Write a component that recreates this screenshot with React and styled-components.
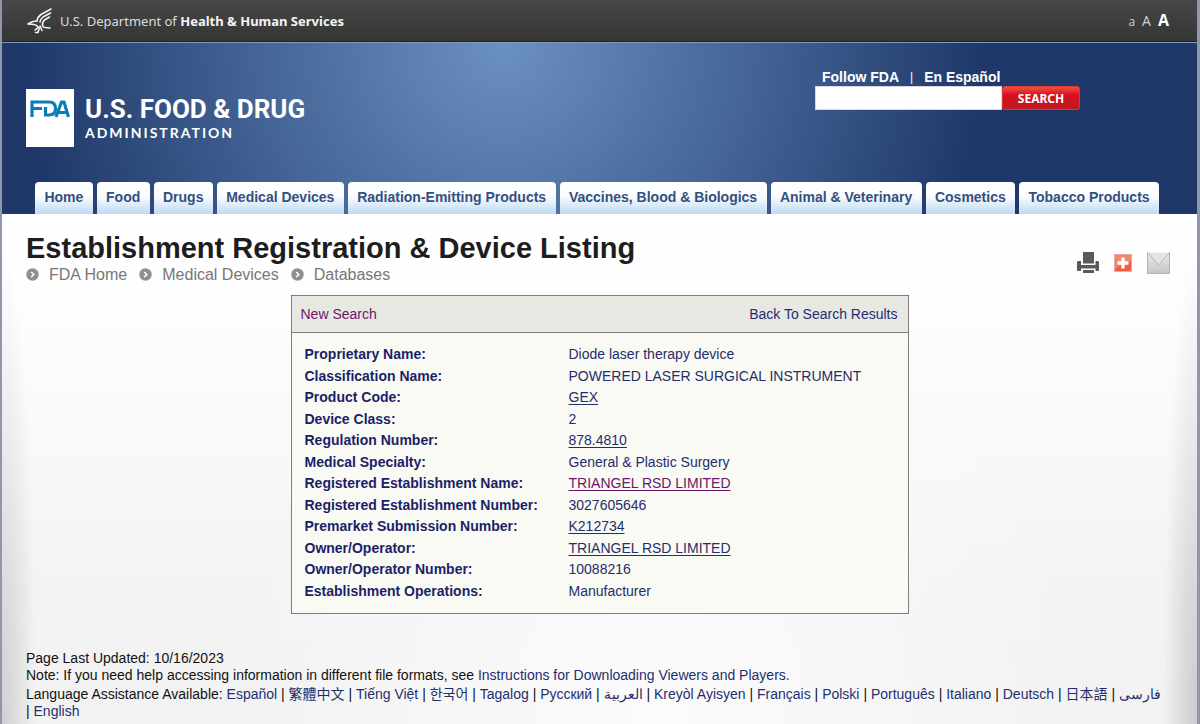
import React from "react";
import styled, { createGlobalStyle } from "styled-components";

const GlobalStyle = createGlobalStyle`
  * { box-sizing: border-box; }
  body {
    margin: 0;
    background: #8d99a8;
    font-family: "Liberation Sans", Arial, "Noto Sans CJK TC", sans-serif;
    font-size: 14px;
    color: #111;
  }
  a { color: #1f2f6e; text-decoration: none; }
`;

const Page = styled.div`
  min-height: 100vh;
  margin: 0 3px 0 2px;
  display: flex;
  flex-direction: column;
`;

const TopBar = styled.div`
  height: 42px;
  padding: 0 28px 0 24px;
  display: flex;
  align-items: center;
  justify-content: space-between;
  background: linear-gradient(#474747, #353535);
  border-bottom: 1px solid #222;
`;

const Department = styled.a`
  display: flex;
  align-items: center;
  gap: 7px;
  color: #dcdcdc;
  font-family: "Noto Sans", "Open Sans", sans-serif;
  font-size: 13px;
  strong { color: #f4f4f4; }
`;

const TextSizes = styled.div`
  display: flex;
  align-items: baseline;
  gap: 7px;
`;

const SizeButton = styled.button`
  padding: 0;
  border: 0;
  background: none;
  color: ${(p) => (p.$bold ? "#fff" : "#d0d0d0")};
  font-family: "Open Sans", "Noto Sans", sans-serif;
  font-size: ${(p) => p.$size}px;
  font-weight: ${(p) => (p.$bold ? 700 : 400)};
  line-height: 20px;
`;

const Header = styled.header`
  border-top: 1px solid #7f9cc0;
  background: radial-gradient(circle 480px at 42% 0, #6b91c1 0%, #456697 50%, #1f3869 100%);
`;

const HeaderMain = styled.div`
  height: 139px;
  padding: 25px 117px 0 24px;
  display: flex;
  justify-content: space-between;
  align-items: flex-start;
`;

const Brand = styled.a`
  margin-top: 21px;
  display: flex;
  gap: 11px;
  color: #fff;
`;

const BrandMark = styled.span`
  width: 48px;
  height: 58px;
  padding: 11px 4px 0;
  background: #fff;
`;

const BrandName = styled.span`
  padding-top: 5px;
  display: flex;
  flex-direction: column;
  font-family: Roboto, sans-serif;
  font-size: 26px;
  font-weight: 700;
  line-height: 30px;
  white-space: nowrap;
`;

const BrandSub = styled.span`
  font-family: Lato, sans-serif;
  font-size: 14px;
  line-height: 18px;
  letter-spacing: 2px;
`;

const SearchArea = styled.form`
  width: 265px;
`;

const QuickLinks = styled.div`
  height: 18px;
  padding-left: 7px;
  display: flex;
  align-items: center;
  gap: 11px;
  color: #fff;
  a { color: #fff; font-weight: 700; }
  span { font-size: 12px; }
`;

const SearchRow = styled.div`
  display: flex;
`;

const SearchInput = styled.input`
  flex: 1;
  min-width: 0;
  height: 24px;
  padding: 0 6px;
  border: 1px solid #d8d8d8;
  border-radius: 0;
  background: #fff;
`;

const SearchButton = styled.button`
  width: 78px;
  height: 24px;
  padding: 0;
  border: 1px solid #d83a2c;
  border-radius: 3px;
  background: linear-gradient(#f0523f 0%, #dc0f22 35%, #c5161f 80%, #c01c22 100%);
  color: #fff;
  font-family: "Noto Sans", "Open Sans", sans-serif;
  font-size: 12px;
  font-weight: 700;
`;

const Tabs = styled.nav`
  padding: 0 38px 0 33px;
  display: flex;
  gap: 4px;
`;

const Tab = styled.a`
  flex: 1 1 auto;
  height: 32px;
  border-radius: 4px 4px 0 0;
  background: linear-gradient(#ffffff 0%, #fafcfe 45%, #bcdaf3 100%);
  color: #33507f;
  font-size: 14px;
  font-weight: 700;
  line-height: 30px;
  text-align: center;
  white-space: nowrap;
`;

const Main = styled.main`
  flex: 1;
  padding: 18px 24px 4px;
  background:
    radial-gradient(ellipse 34px 95% at 0 100%, rgba(0, 0, 0, 0.14), rgba(0, 0, 0, 0)),
    radial-gradient(ellipse 34px 95% at 100% 100%, rgba(0, 0, 0, 0.16), rgba(0, 0, 0, 0)),
    radial-gradient(ellipse 36% 100% at 55% 100%, rgba(255, 255, 255, 0.7), rgba(255, 255, 255, 0)),
    linear-gradient(#ffffff, #fdfdfd 20%, #f3f3f3 75%, #f2f2f2);
`;

const TitleRow = styled.div`
  padding-right: 3px;
  display: flex;
  justify-content: space-between;
`;

const Title = styled.h1`
  margin: 0;
  color: #1d1d1d;
  font-size: 29px;
  line-height: 33px;
`;

const Breadcrumbs = styled.nav`
  display: flex;
  gap: 12px;
`;

const Crumb = styled.a`
  display: flex;
  align-items: center;
  gap: 10px;
  color: #777;
  font-size: 16px;
  line-height: 19px;
`;

const Tools = styled.div`
  padding-top: 19px;
  display: flex;
  align-items: flex-start;
  gap: 15px;
`;

const ToolButton = styled.button`
  height: 24px;
  padding: 0;
  border: 0;
  background: none;
  display: flex;
  align-items: center;
`;

const Panel = styled.section`
  max-width: 618px;
  margin: 11px auto 0;
  border: 1px solid #7d7d7d;
  background: #f9faf4;
`;

const PanelHead = styled.div`
  height: 37px;
  padding: 0 10px 0 9px;
  display: flex;
  align-items: center;
  justify-content: space-between;
  border-bottom: 1px solid #7d7d7d;
  background: #e7e8e2;
`;

const PanelLink = styled.a`
  color: ${(p) => (p.$visited ? "#6c176c" : "#1f2f6e")};
`;

const DataTable = styled.table`
  width: 100%;
  margin: 11px 0;
  border-collapse: collapse;
  color: #262d6c;
  th, td {
    height: 21px;
    padding: 0;
    line-height: 21px;
    text-align: left;
  }
  th {
    width: 277px;
    padding-left: 13px;
    color: #1b1f68;
  }
  tr:nth-child(even) th, tr:nth-child(even) td { height: 22px; }
`;

const DataLink = styled.a`
  color: ${(p) => (p.$visited ? "#6c176c" : "#1f2f6e")};
  text-decoration: underline;
  text-underline-offset: 2px;
`;

const Footer = styled.footer`
  padding-top: 36px;
  line-height: 17px;
  p { margin: 0; }
`;

const Languages = styled.p`
  padding-top: 2px;
`;

const Language = styled.span`
  white-space: nowrap;
`;

function EagleLogo() {
  return (
    <svg width="27" height="28" viewBox="0 0 27 28" fill="none" stroke="#f2f2f2" strokeWidth="1.6" strokeLinecap="round" strokeLinejoin="round" aria-hidden="true">
      <path d="M25 2 L15 7.500 Q11.500 10 11 14" />
      <path d="M24.500 6 L17 10 Q14.500 12 14 15" />
      <path d="M23.500 10 L18.500 13 Q17 14 16.500 17" />
      <path d="M11 14 Q7 13.500 2 17 L8 17.500 Q11 18 12 20" />
      <path d="M16.500 17 Q16 20 19 20.500 L24 21 M12 20 Q11 22 9 23 M13.500 20.500 L12 25.500 H9.500 M14 19 L16 23.500" />
    </svg>
  );
}

function FdaMark() {
  return (
    <svg width="40" height="18" viewBox="0 0 40 18" fill="none" stroke="#0a7cba" strokeWidth="3.200" aria-hidden="true">
      <path d="M2 17 V2 H19 Q25.500 2 25.500 8.500 Q25.500 15 19 15 H15.500 V7 M2 8.500 H12" />
      <path d="M26 17 L31.500 2 H34 L38.500 17 M29 12.500 H37" />
    </svg>
  );
}

function CrumbIcon() {
  return (
    <svg width="13" height="13" viewBox="0 0 13 13" aria-hidden="true">
      <circle cx="6.500" cy="6.500" r="6.200" fill="#8f8f8f" />
      <path d="M5.200 4 L7.800 6.500 L5.200 9" fill="none" stroke="#fff" strokeWidth="1.600" />
    </svg>
  );
}

function PrinterIcon() {
  return (
    <svg width="22" height="22" viewBox="0 0 22 22" fill="#5a5a5a" aria-hidden="true">
      <path d="M6 0 H17 V11.500 H6 Z" />
      <path d="M0 10 Q0 9 1 9 H4 V13 H18.500 V9 H21 Q22 9 22 10 V18 Q22 19 21 19 H18.500 V16 H4 V19 H1 Q0 19 0 18 Z" />
      <path d="M4 14 H18.500 V16.500 H4 Z" />
      <path d="M6 18 H17 V21 H6 Z" />
    </svg>
  );
}

function ShareIcon() {
  return (
    <svg width="18" height="18" viewBox="0 0 18 18" aria-hidden="true">
      <rect width="18" height="18" fill="#ee5f42" />
      <path d="M0 0 H18 V7 Q8 9 0 16 Z" fill="#f08570" />
      <rect x="0.500" y="0.500" width="17" height="17" fill="none" stroke="#ecaa9e" />
      <path d="M9 3.500 V14.500 M3.500 9 H14.500" stroke="#fff" strokeWidth="3.400" />
    </svg>
  );
}

function MailIcon() {
  return (
    <svg width="23" height="22" viewBox="0 0 23 22" aria-hidden="true">
      <defs>
        <linearGradient id="mail" x1="0" y1="0" x2="0" y2="1">
          <stop offset="0" stopColor="#e9e9e9" />
          <stop offset="1" stopColor="#c6c6c6" />
        </linearGradient>
      </defs>
      <path d="M0.500 0.500 L11.500 13 L22.500 0.500 V21.500 H0.500 Z" fill="url(#mail)" />
      <path d="M0.500 0.500 H22.500 L11.500 13 Z" fill="#e4e4e4" />
      <path d="M0.500 0.500 V21.500 H22.500 V0.500 M0.500 0.500 L11.500 13 L22.500 0.500" fill="none" stroke="#b3b3b3" />
    </svg>
  );
}

const TABS = [
  "Home",
  "Food",
  "Drugs",
  "Medical Devices",
  "Radiation-Emitting Products",
  "Vaccines, Blood & Biologics",
  "Animal & Veterinary",
  "Cosmetics",
  "Tobacco Products",
];

const RECORD = [
  { label: "Proprietary Name:", value: "Diode laser therapy device" },
  { label: "Classification Name:", value: "POWERED LASER SURGICAL INSTRUMENT" },
  { label: "Product Code:", value: "GEX", link: true },
  { label: "Device Class:", value: "2" },
  { label: "Regulation Number:", value: "878.4810", link: true },
  { label: "Medical Specialty:", value: "General & Plastic Surgery" },
  { label: "Registered Establishment Name:", value: "TRIANGEL RSD LIMITED", link: true, visited: true },
  { label: "Registered Establishment Number:", value: "3027605646" },
  { label: "Premarket Submission Number:", value: "K212734", link: true },
  { label: "Owner/Operator:", value: "TRIANGEL RSD LIMITED", link: true },
  { label: "Owner/Operator Number:", value: "10088216" },
  { label: "Establishment Operations:", value: "Manufacturer" },
];

const LANGUAGES = [
  "Español", "繁體中文", "Tiếng Việt", "한국어", "Tagalog", "Русский", "العربية",
  "Kreyòl Ayisyen", "Français", "Polski", "Português", "Italiano", "Deutsch",
  "日本語", "فارسی", "English",
];

export default function App() {
  return (
    <>
      <GlobalStyle />
      <Page>
        <TopBar>
          <Department href="#">
            <EagleLogo />
            <span>U.S. Department of <strong>Health &amp; Human Services</strong></span>
          </Department>
          <TextSizes>
            <SizeButton type="button" $size={12} aria-label="Small text">a</SizeButton>
            <SizeButton type="button" $size={14} aria-label="Medium text">A</SizeButton>
            <SizeButton type="button" $size={16} $bold aria-label="Large text">A</SizeButton>
          </TextSizes>
        </TopBar>
        <Header>
          <HeaderMain>
            <Brand href="#">
              <BrandMark><FdaMark /></BrandMark>
              <BrandName>
                U.S. FOOD &amp; DRUG
                <BrandSub>ADMINISTRATION</BrandSub>
              </BrandName>
            </Brand>
            <SearchArea onSubmit={(e) => e.preventDefault()}>
              <QuickLinks>
                <a href="#">Follow FDA</a>
                <span>|</span>
                <a href="#">En Español</a>
              </QuickLinks>
              <SearchRow>
                <SearchInput type="text" aria-label="Search FDA" />
                <SearchButton type="submit">SEARCH</SearchButton>
              </SearchRow>
            </SearchArea>
          </HeaderMain>
          <Tabs>
            {TABS.map((name) => <Tab key={name} href="#">{name}</Tab>)}
          </Tabs>
        </Header>
        <Main>
          <TitleRow>
            <div>
              <Title>Establishment Registration &amp; Device Listing</Title>
              <Breadcrumbs>
                {["FDA Home", "Medical Devices", "Databases"].map((name) => (
                  <Crumb key={name} href="#"><CrumbIcon />{name}</Crumb>
                ))}
              </Breadcrumbs>
            </div>
            <Tools>
              <ToolButton type="button" aria-label="Print"><PrinterIcon /></ToolButton>
              <ToolButton type="button" aria-label="Share"><ShareIcon /></ToolButton>
              <ToolButton type="button" aria-label="E-mail"><MailIcon /></ToolButton>
            </Tools>
          </TitleRow>
          <Panel>
            <PanelHead>
              <PanelLink href="#" $visited>New Search</PanelLink>
              <PanelLink href="#">Back To Search Results</PanelLink>
            </PanelHead>
            <DataTable>
              <tbody>
                {RECORD.map((row) => (
                  <tr key={row.label}>
                    <th scope="row">{row.label}</th>
                    <td>
                      {row.link
                        ? <DataLink href="#" $visited={row.visited}>{row.value}</DataLink>
                        : row.value}
                    </td>
                  </tr>
                ))}
              </tbody>
            </DataTable>
          </Panel>
          <Footer>
            <p>Page Last Updated: 10/16/2023</p>
            <p>
              Note: If you need help accessing information in different file formats, see{" "}
              <a href="#">Instructions for Downloading Viewers and Players.</a>
            </p>
            <Languages>
              Language Assistance Available:{" "}
              {LANGUAGES.map((name, i) => (
                <React.Fragment key={name}>
                  {i > 0 && " "}
                  <Language>
                    {i > 0 && "| "}
                    <a href="#"><bdi>{name}</bdi></a>
                  </Language>
                </React.Fragment>
              ))}
            </Languages>
          </Footer>
        </Main>
      </Page>
    </>
  );
}
